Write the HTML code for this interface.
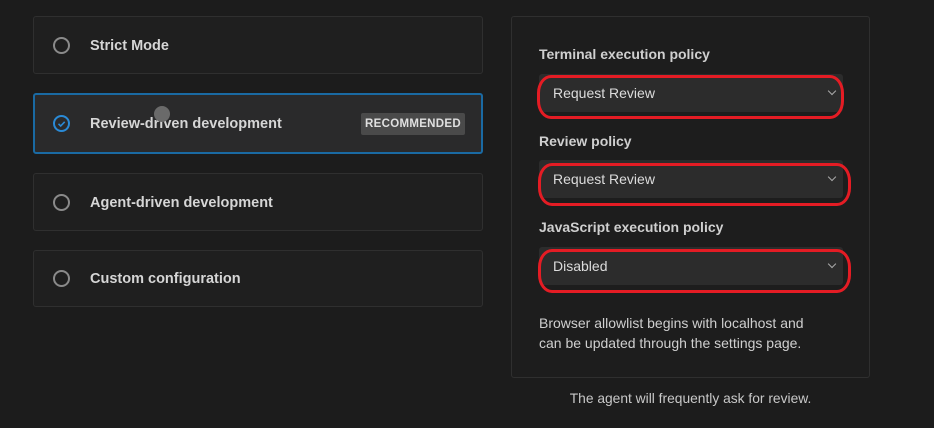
<!DOCTYPE html>
<html><head><style>
body{margin:0;width:934px;height:428px;background:#1c1c1c;font-family:"Liberation Sans",sans-serif;position:relative;overflow:hidden;color:#d8d8d8}
.card{position:absolute;left:33px;width:450px;background:#1f1f1f;border:1px solid #2f2f2f;border-radius:3px;box-sizing:border-box}
.card .r{position:absolute;left:19px;width:17px;height:17px;border:2px solid #8a8a8a;border-radius:50%;box-sizing:border-box}
.card .t{position:absolute;left:56px;font-weight:bold;font-size:14.5px;color:#d6d6d6}
.panel{position:absolute;left:511px;top:16px;width:359px;height:362px;border:1px solid #2f2f2f;border-radius:3px;box-sizing:border-box;background:#1d1d1d}
.lbl{position:absolute;left:539px;font-weight:bold;font-size:14px;color:#cfcfcf}
.dd{position:absolute;left:539px;width:304px;height:38px;background:#2c2c2c;border-radius:3px;font-size:14px;color:#dcdcdc}
.dd span{position:absolute;left:14px;top:11px}
.dd i{position:absolute;right:8px;top:14px;width:5px;height:5px;border-right:1.5px solid #aaa;border-bottom:1.5px solid #aaa;transform:rotate(45deg)}
.red{position:absolute;border:3px solid #e41c24;border-radius:14px/18px;box-sizing:border-box}
.txt{position:absolute;font-size:14px;color:#cfcfcf;line-height:20px}
</style></head><body>
<div class="card" style="top:16px;height:58px"><div class="r" style="top:20px"></div><div class="t" style="top:21px">Strict Mode</div></div>
<div class="card" style="top:93px;height:61px;background:#2a2a2b;border:2px solid #1a6aa3"><div class="r" style="top:20px;left:18px;border-color:#2a8ad6"><svg width="13" height="13" style="position:absolute;left:0;top:0" viewBox="0 0 13 13"><path d="M3.5 6.8l2.2 2.2 4-4.2" stroke="#2a8ad6" stroke-width="1.6" fill="none"/></svg></div><div class="t" style="top:21px;left:55px">Review-driven development</div>
<div style="position:absolute;left:119px;top:11px;width:16px;height:16px;border-radius:50%;background:#6a6a6a"></div>
<div style="position:absolute;left:326px;top:18px;width:104px;height:22px;background:#4a4a4a;border-radius:2px;font-size:11.5px;font-weight:bold;color:#e0e0e0;text-align:center;line-height:22px;letter-spacing:.3px">RECOMMENDED</div></div>
<div class="card" style="top:173px;height:58px"><div class="r" style="top:20px"></div><div class="t" style="top:21px">Agent-driven development</div></div>
<div class="card" style="top:250px;height:57px"><div class="r" style="top:19px"></div><div class="t" style="top:20px">Custom configuration</div></div>
<div class="panel"></div>
<div class="lbl" style="top:46px">Terminal execution policy</div>
<div class="dd" style="top:74px"><span>Request Review</span><i></i></div>
<div class="red" style="left:537px;top:75px;width:307px;height:44px"></div>
<div class="lbl" style="top:133px">Review policy</div>
<div class="dd" style="top:160px"><span>Request Review</span><i></i></div>
<div class="red" style="left:538px;top:163px;width:313px;height:43px"></div>
<div class="lbl" style="top:219px">JavaScript execution policy</div>
<div class="dd" style="top:247px"><span>Disabled</span><i></i></div>
<div class="red" style="left:538px;top:249px;width:313px;height:44px"></div>
<div class="txt" style="left:539px;top:313px">Browser allowlist begins with localhost and<br>can be updated through the settings page.</div>
<div class="txt" style="left:511px;width:359px;text-align:center;top:389px;font-size:13.8px;color:#c8c8c8">The agent will frequently ask for review.</div>
</body></html>
